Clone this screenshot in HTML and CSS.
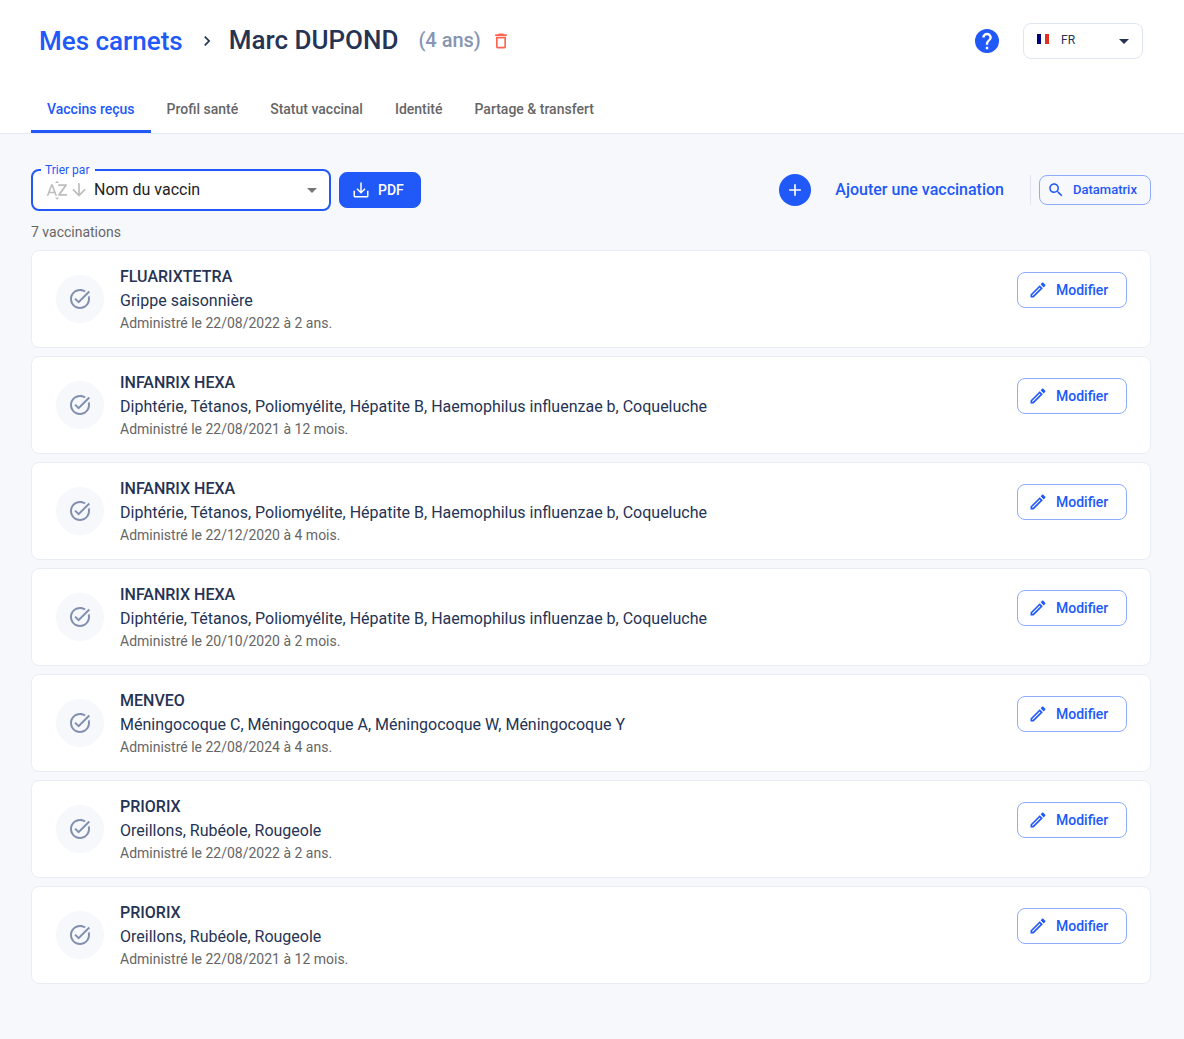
FILE: index.html
```
<!DOCTYPE html>
<html lang="fr">
<head>
  <meta charset="UTF-8">
  <meta name="viewport" content="width=device-width, initial-scale=1.0">
  <title>Marc DUPOND - Vaccins reçus</title>
  <link rel="stylesheet" href="styles.css">
</head>
<body>
  <!-- Icônes partagées -->
  <svg class="sprite" aria-hidden="true">
    <symbol id="icon-check" viewBox="0 0 24 24">
      <path d="M22 5.18 10.59 16.6l-4.24-4.24 1.41-1.41 2.83 2.83 10-10L22 5.18zM19.79 10.22c.13.57.21 1.17.21 1.78 0 4.42-3.58 8-8 8s-8-3.58-8-8 3.58-8 8-8c1.58 0 3.04.46 4.28 1.25l1.44-1.44C16.1 2.67 14.13 2 12 2 6.48 2 2 6.48 2 12s4.48 10 10 10 10-4.48 10-10c0-1.19-.22-2.33-.6-3.39l-1.61 1.61z"/>
    </symbol>
    <symbol id="icon-edit" viewBox="0 0 24 24">
      <path d="M14.06 9.02l.92.92L5.92 19H5v-.92l9.06-9.06M17.66 3c-.25 0-.51.1-.7.29l-1.83 1.83 3.75 3.75 1.83-1.83c.39-.39.39-1.02 0-1.41l-2.34-2.34c-.2-.2-.45-.29-.71-.29zm-3.6 3.19L3 17.25V21h3.75L17.81 9.94l-3.75-3.75z"/>
    </symbol>
    <symbol id="icon-arrow" viewBox="0 0 24 24">
      <path d="M7 10l5 5 5-5z"/>
    </symbol>
  </svg>

  <header class="header">
    <div class="title-bar">
      <nav class="breadcrumb">
        <a href="#">Mes carnets</a>
        <svg class="chevron" viewBox="0 0 24 24"><path d="M10 6 8.59 7.41 13.17 12l-4.58 4.59L10 18l6-6z"/></svg>
        <h1>Marc DUPOND</h1>
        <span class="age">(4 ans)</span>
        <button class="icon-btn delete" type="button" aria-label="Supprimer le carnet">
          <svg viewBox="0 0 24 24"><path d="M6 19c0 1.1.9 2 2 2h8c1.1 0 2-.9 2-2V7H6v12zM8 9h8v10H8V9zm7.5-5-1-1h-5l-1 1H5v2h14V4z"/></svg>
        </button>
      </nav>
      <button class="icon-btn help" type="button" aria-label="Aide">
        <svg viewBox="0 0 24 24"><path d="M12 0a12 12 0 1 0 0 24 12 12 0 0 0 0-24zm1.2 20.2h-2.4v-2.4h2.4v2.4zm2.6-9.2-1.1 1.1c-1 1-1.5 1.7-1.5 3.7h-2.4v-.6c0-1.3.5-2.5 1.4-3.4l1.5-1.5c.4-.4.7-1 .7-1.7a2.4 2.4 0 0 0-4.8 0H7.2a4.8 4.8 0 0 1 9.6 0c0 .9-.4 1.8-1 2.4z"/></svg>
      </button>
      <div class="lang">
        <svg class="flag" viewBox="0 0 12 10"><path fill="#00007f" d="M0 0h4v10H0z"/><path fill="#fff" d="M4 0h4v10H4z"/><path fill="#e1301e" d="M8 0h4v10H8z"/></svg>
        <select id="lang" aria-label="Langue">
          <option>FR</option>
        </select>
        <svg class="arrow"><use href="#icon-arrow"/></svg>
      </div>
    </div>

    <nav class="tabs">
      <a class="tab active" href="#">Vaccins reçus</a>
      <a class="tab" href="#">Profil santé</a>
      <a class="tab" href="#">Statut vaccinal</a>
      <a class="tab" href="#">Identité</a>
      <a class="tab" href="#">Partage &amp; transfert</a>
    </nav>
  </header>

  <main class="content">
    <!-- Barre d'outils -->
    <div class="toolbar">
      <fieldset class="sort">
        <legend><label for="sort">Trier par</label></legend>
        <div class="sort-row">
          <svg class="sort-az" viewBox="0 0 24 24"><path d="M10 5h4l-2-2.3zM10 19.5h4l-2 2.3zM6.1 6.3 1.7 17.7h1.8l.9-2.4h5l.9 2.4h1.8L7.7 6.3H6.1zM5 13.7l1.9-5.1 1.9 5.1H5zM15.7 16.1h6.3v1.6h-8.900v-1.3l6.2-8.500h-6.1V6.3h8.7v1.3l-6.2 8.500z"/></svg>
          <svg class="sort-down" viewBox="0 0 24 24"><path d="m20 12-1.41-1.41L13 16.17V4h-2v12.17l-5.58-5.59L4 12l8 8 8-8z"/></svg>
          <select id="sort">
            <option>Nom du vaccin</option>
          </select>
          <svg class="arrow"><use href="#icon-arrow"/></svg>
        </div>
      </fieldset>
      <button class="btn btn-pdf" type="button">
        <svg viewBox="0 0 24 24"><path d="M22 13v7c0 1.1-.9 2-2 2H4c-1.1 0-2-.9-2-2v-7h2v7h16v-7h2zM16.6 9.6 18 11l-6 6-6-6 1.4-1.4 3.6 3.6V2h2v11.2z"/></svg>
        PDF
      </button>
      <button class="add" type="button">
        <span class="add-icon">
          <svg viewBox="0 0 24 24"><path d="M19 13h-6v6h-2v-6H5v-2h6V5h2v6h6v2z"/></svg>
        </span>
        Ajouter une vaccination
      </button>
      <div class="scan">
        <button class="btn btn-scan" type="button">
          <svg viewBox="0 0 24 24"><path d="M15.5 14h-.79l-.28-.27C15.41 12.59 16 11.11 16 9.5 16 5.91 13.09 3 9.5 3S3 5.91 3 9.5 5.91 16 9.5 16c1.61 0 3.09-.59 4.23-1.57l.27.28v.79l5 4.99L20.49 19l-4.99-5zm-6 0C7.01 14 5 11.99 5 9.5S7.01 5 9.5 5 14 7.01 14 9.5 11.99 14 9.5 14z"/></svg>
          Datamatrix
        </button>
      </div>
    </div>

    <p class="count">7 vaccinations</p>

    <!-- Liste des vaccinations -->
    <ul class="list">
      <li class="card">
        <span class="status"><svg><use href="#icon-check"/></svg></span>
        <div class="info">
          <h2>FLUARIXTETRA</h2>
          <p class="diseases">Grippe saisonnière</p>
          <p class="date">Administré le 22/08/2022 à 2 ans.</p>
        </div>
        <button class="btn btn-edit" type="button"><svg><use href="#icon-edit"/></svg>Modifier</button>
      </li>
      <li class="card">
        <span class="status"><svg><use href="#icon-check"/></svg></span>
        <div class="info">
          <h2>INFANRIX HEXA</h2>
          <p class="diseases">Diphtérie, Tétanos, Poliomyélite, Hépatite B, Haemophilus influenzae b, Coqueluche</p>
          <p class="date">Administré le 22/08/2021 à 12 mois.</p>
        </div>
        <button class="btn btn-edit" type="button"><svg><use href="#icon-edit"/></svg>Modifier</button>
      </li>
      <li class="card">
        <span class="status"><svg><use href="#icon-check"/></svg></span>
        <div class="info">
          <h2>INFANRIX HEXA</h2>
          <p class="diseases">Diphtérie, Tétanos, Poliomyélite, Hépatite B, Haemophilus influenzae b, Coqueluche</p>
          <p class="date">Administré le 22/12/2020 à 4 mois.</p>
        </div>
        <button class="btn btn-edit" type="button"><svg><use href="#icon-edit"/></svg>Modifier</button>
      </li>
      <li class="card">
        <span class="status"><svg><use href="#icon-check"/></svg></span>
        <div class="info">
          <h2>INFANRIX HEXA</h2>
          <p class="diseases">Diphtérie, Tétanos, Poliomyélite, Hépatite B, Haemophilus influenzae b, Coqueluche</p>
          <p class="date">Administré le 20/10/2020 à 2 mois.</p>
        </div>
        <button class="btn btn-edit" type="button"><svg><use href="#icon-edit"/></svg>Modifier</button>
      </li>
      <li class="card">
        <span class="status"><svg><use href="#icon-check"/></svg></span>
        <div class="info">
          <h2>MENVEO</h2>
          <p class="diseases">Méningocoque C, Méningocoque A, Méningocoque W, Méningocoque Y</p>
          <p class="date">Administré le 22/08/2024 à 4 ans.</p>
        </div>
        <button class="btn btn-edit" type="button"><svg><use href="#icon-edit"/></svg>Modifier</button>
      </li>
      <li class="card">
        <span class="status"><svg><use href="#icon-check"/></svg></span>
        <div class="info">
          <h2>PRIORIX</h2>
          <p class="diseases">Oreillons, Rubéole, Rougeole</p>
          <p class="date">Administré le 22/08/2022 à 2 ans.</p>
        </div>
        <button class="btn btn-edit" type="button"><svg><use href="#icon-edit"/></svg>Modifier</button>
      </li>
      <li class="card">
        <span class="status"><svg><use href="#icon-check"/></svg></span>
        <div class="info">
          <h2>PRIORIX</h2>
          <p class="diseases">Oreillons, Rubéole, Rougeole</p>
          <p class="date">Administré le 22/08/2021 à 12 mois.</p>
        </div>
        <button class="btn btn-edit" type="button"><svg><use href="#icon-edit"/></svg>Modifier</button>
      </li>
    </ul>
  </main>
</body>
</html>
```
FILE: styles.css
```
* {
  box-sizing: border-box;
}
body {
  margin: 0;
  font-family: Roboto, sans-serif;
  font-size: 16px;
  color: #253354;
  background-color: #f7f8fc;
}
h1, h2, p, ul {
  margin: 0;
  padding: 0;
}
a {
  color: #2158f8;
  text-decoration: none;
}
svg {
  fill: currentColor;
  flex: none;
}
button, select {
  font: inherit;
  color: inherit;
  background: none;
  border: none;
  margin: 0;
  padding: 0;
}
button {
  cursor: pointer;
}
select {
  appearance: none;
  flex: 1;
  min-width: 0;
  outline: none;
}
.sprite {
  display: none;
}

/* En-tête */
.header {
  background-color: #fff;
  border-bottom: 1px solid #e6eaf3;
}
.title-bar {
  display: flex;
  align-items: center;
  padding: 20px 41px 20px 39px;
}
.breadcrumb {
  display: flex;
  align-items: center;
  flex: 1;
  font-size: 26px;
  font-weight: 500;
  line-height: 42px;
}
.breadcrumb h1 {
  padding-bottom: 2px;
  font-size: 26px;
  font-weight: 500;
  line-height: 40px;
}
.chevron {
  width: 20px;
  height: 20px;
  margin: 0 12px 0 14px;
}
.age {
  margin-left: 20px;
  padding-bottom: 2px;
  font-size: 20px;
  line-height: 40px;
  color: #8695b3;
}
.icon-btn {
  display: flex;
}
.icon-btn svg {
  width: 24px;
  height: 24px;
}
.delete {
  margin-left: 10px;
  color: #ff6450;
}
.delete svg {
  width: 20px;
  height: 20px;
}
.help {
  margin-right: 24px;
  color: #2158f8;
}
.lang {
  display: flex;
  align-items: center;
  width: 120px;
  height: 36px;
  padding: 0 6px 0 13px;
  border: 1px solid #e0e6f1;
  border-radius: 8px;
  font-size: 12px;
}
.lang select {
  padding-bottom: 2px;
}
.flag {
  width: 12px;
  height: 10px;
  margin: 0 12px 4px 0;
}
.arrow {
  width: 24px;
  height: 24px;
}
.tabs {
  display: flex;
  padding: 0 31px;
}
.tab {
  height: 51px;
  padding: 0 16px;
  border-bottom: 3px solid transparent;
  color: #666;
  font-size: 14px;
  font-weight: 500;
  line-height: 54px;
}
.tab.active {
  color: #2158f8;
  border-bottom-color: #2158f8;
  border-radius: 2px 2px 0 0;
}

/* Barre d'outils */
.content {
  padding: 28px 33px 55px 31px;
}
.toolbar {
  display: flex;
  align-items: center;
}
.sort {
  width: 300px;
  height: 49px;
  margin: 0;
  padding: 0 5px 0 8px;
  border: 2px solid #2158f8;
  border-radius: 8px;
  background-color: #fff;
}
.sort legend {
  padding: 0 6px 0 4px;
  font-size: 12px;
  line-height: 16px;
  color: #2158f8;
}
.sort-row {
  display: flex;
  align-items: center;
  height: 24px;
  padding-left: 4px;
  color: #222;
}
.sort-az {
  width: 24px;
  height: 24px;
  color: #bdbdbd;
}
.sort-down {
  width: 20px;
  height: 20px;
  margin-right: 5px;
  color: #bdbdbd;
}
.sort select {
  padding-bottom: 2px;
}
.sort .arrow {
  color: #757575;
}
.btn {
  display: flex;
  align-items: center;
  height: 36px;
  padding: 0 14px 0 10px;
  border: 1px solid #8fabfb;
  border-radius: 8px;
  color: #2158f8;
  font-size: 14px;
  font-weight: 500;
}
.btn svg {
  width: 20px;
  height: 20px;
  margin-right: 8px;
}
.btn-pdf {
  margin: 6px 0 0 8px;
  padding: 0 16px 0 12px;
  border-color: #2158f8;
  background-color: #2158f8;
  color: #fff;
}
.btn-pdf svg {
  width: 18px;
  height: 18px;
}
.add {
  display: flex;
  align-items: center;
  margin: 6px 26px 0 auto;
  color: #2158f8;
  font-weight: 500;
}
.add-icon {
  display: flex;
  align-items: center;
  justify-content: center;
  width: 32px;
  height: 32px;
  margin-right: 24px;
  border-radius: 50%;
  background-color: #2158f8;
  color: #fff;
}
.add-icon svg {
  width: 20px;
  height: 20px;
}
.scan {
  margin-top: 6px;
  padding-left: 8px;
  border-left: 1px solid #e0e6f1;
}
.btn-scan {
  min-width: 112px;
  height: 30px;
  padding: 0 8px 0 7px;
  font-size: 13px;
}
.btn-scan svg {
  width: 18px;
  height: 18px;
}
.count {
  margin: 10px 0 7px;
  font-size: 14px;
  line-height: 22px;
  color: #666;
}

/* Liste */
.list {
  display: flex;
  flex-direction: column;
  gap: 8px;
  list-style: none;
}
.card {
  display: flex;
  align-items: center;
  padding: 14px 23px 14px 24px;
  border: 1px solid #e9edf6;
  border-radius: 8px;
  background-color: #fff;
}
.status {
  display: flex;
  align-items: center;
  justify-content: center;
  width: 48px;
  height: 48px;
  margin-right: 16px;
  border-radius: 50%;
  background-color: #f7f8fc;
  color: #8090ae;
}
.status svg {
  width: 24px;
  height: 24px;
}
.info {
  flex: 1;
}
.info h2 {
  font-size: 16px;
  font-weight: 500;
  line-height: 24px;
}
.diseases {
  line-height: 24px;
}
.date {
  font-size: 14px;
  line-height: 20px;
  color: #666;
}
.btn-edit {
  align-self: flex-start;
  min-width: 110px;
  margin-top: 7px;
}
```
